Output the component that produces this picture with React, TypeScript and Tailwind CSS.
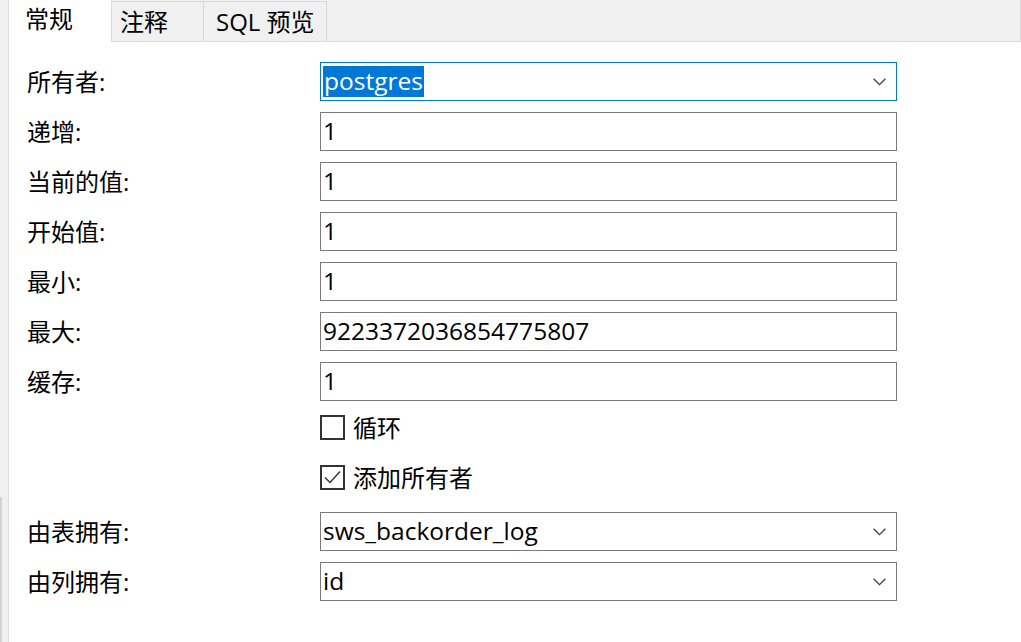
import React from "react";

const FONT = { fontFamily: "'Open Sans','Noto Sans CJK SC',sans-serif" };

function Chevron() {
  return (
    <svg width="13" height="8" viewBox="0 0 13 8" className="shrink-0">
      <path d="M0.6 0.8 L6.5 6.6 L12.4 0.8" fill="none" stroke="#3a3a3a" strokeWidth="1.2" />
    </svg>
  );
}

function Box({ children, select, focused }: { children: React.ReactNode; select?: boolean; focused?: boolean }) {
  return (
    <div
      className={`w-[577px] h-[39px] bg-white border flex items-center pl-[2px] pr-[10px] ${
        focused ? "border-[#0078d7]" : "border-[#7a7a7a]"
      }`}
    >
      <div className="flex-1 flex items-center text-[24.5px] leading-none text-black whitespace-nowrap">{children}</div>
      {select && <Chevron />}
    </div>
  );
}

function Row({ label, children }: { label: string; children: React.ReactNode }) {
  return (
    <div className="flex items-center h-[39px]">
      <div className="w-[293px] text-[24px] leading-none text-black">{label}</div>
      {children}
    </div>
  );
}

function Check({ checked, label }: { checked?: boolean; label: string }) {
  return (
    <div className="flex items-start h-[39px] pt-[3px]">
      <div className="w-[293px]" />
      <div className="flex items-center gap-[8px]">
        <div className="w-[25px] h-[25px] border-2 border-[#333333] bg-white flex items-center justify-center">
          {checked && (
            <svg width="21" height="21" viewBox="0 0 21 21">
              <path d="M3 10.5 L8 15.5 L18 4.5" fill="none" stroke="#333333" strokeWidth="1.4" />
            </svg>
          )}
        </div>
        <span className="text-[24px] leading-none text-black">{label}</span>
      </div>
    </div>
  );
}

export default function App() {
  return (
    <div className="w-[1021px] h-[642px] flex bg-white overflow-hidden" style={FONT}>
      <div className="w-[9px] h-full bg-[#f0f0f0] border-r border-[#dcdcdc] flex flex-col">
        <div className="h-[497px]" />
        <div className="flex-1 w-[2px] bg-[#d3d3d3]" />
      </div>
      <div className="flex-1 flex flex-col">
        <div className="h-[42px] bg-[#f0f0f0] border-b border-[#d9d9d9] border-r flex items-stretch">
          <div className="w-[102px] h-[42px] bg-white flex items-center pl-[16px] pb-[5px] text-[24px] leading-none text-black relative z-10">
            常规
          </div>
          <div className="w-[92px] mt-[1px] border-l border-t border-[#d9d9d9] flex items-center pl-[8px] text-[24px] leading-none text-black">
            注释
          </div>
          <div className="w-[124px] mt-[1px] border-l border-t border-r border-[#d9d9d9] flex items-center pl-[12px] text-[24px] leading-none text-black">
            SQL 预览
          </div>
        </div>
        <div className="flex flex-col gap-[11px] pl-[18px] pt-[20px]">
          <Row label="所有者:">
            <Box select focused>
              <span className="bg-[#0078d7] text-white h-[31px] flex items-center px-[1px]">postgres</span>
            </Box>
          </Row>
          <Row label="递增:">
            <Box>1</Box>
          </Row>
          <Row label="当前的值:">
            <Box>1</Box>
          </Row>
          <Row label="开始值:">
            <Box>1</Box>
          </Row>
          <Row label="最小:">
            <Box>1</Box>
          </Row>
          <Row label="最大:">
            <Box>9223372036854775807</Box>
          </Row>
          <Row label="缓存:">
            <Box>1</Box>
          </Row>
          <Check label="循环" />
          <Check checked label="添加所有者" />
          <Row label="由表拥有:">
            <Box select>sws_backorder_log</Box>
          </Row>
          <Row label="由列拥有:">
            <Box select>id</Box>
          </Row>
        </div>
      </div>
    </div>
  );
}
